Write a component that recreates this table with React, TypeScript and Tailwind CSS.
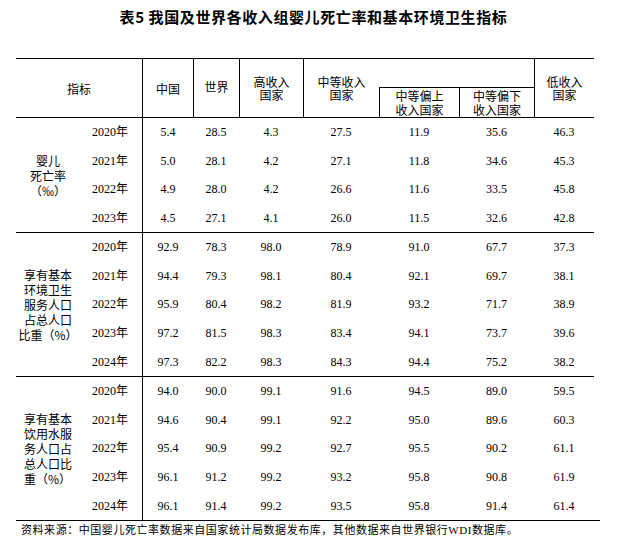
const COLS = "grid grid-cols-[62px_64px_51px_46px_64px_76px_80px_75px_60px]";
const ROW_COLS = "grid grid-cols-[64px_51px_46px_64px_76px_80px_75px_60px]";

const sans = "font-['Noto_Sans_CJK_SC',sans-serif]";
const serif = "font-['Liberation_Serif','Noto_Sans_CJK_SC',serif]";

interface Group {
    label: string[];
    left?: boolean;
    height: string;
    border: boolean;
    rows: string[][];
}

const groups: Group[] = [
    {
        label: ["婴儿", "死亡率", "（‰）"],
        height: "h-[115px]",
        border: true,
        rows: [
            ["2020年", "5.4", "28.5", "4.3", "27.5", "11.9", "35.6", "46.3"],
            ["2021年", "5.0", "28.1", "4.2", "27.1", "11.8", "34.6", "45.3"],
            ["2022年", "4.9", "28.0", "4.2", "26.6", "11.6", "33.5", "45.8"],
            ["2023年", "4.5", "27.1", "4.1", "26.0", "11.5", "32.6", "42.8"],
        ],
    },
    {
        label: ["享有基本", "环境卫生", "服务人口", "占总人口", "比重（%）"],
        height: "h-[144px]",
        border: true,
        rows: [
            ["2020年", "92.9", "78.3", "98.0", "78.9", "91.0", "67.7", "37.3"],
            ["2021年", "94.4", "79.3", "98.1", "80.4", "92.1", "69.7", "38.1"],
            ["2022年", "95.9", "80.4", "98.2", "81.9", "93.2", "71.7", "38.9"],
            ["2023年", "97.2", "81.5", "98.3", "83.4", "94.1", "73.7", "39.6"],
            ["2024年", "97.3", "82.2", "98.3", "84.3", "94.4", "75.2", "38.2"],
        ],
    },
    {
        label: ["享有基本", "饮用水服", "务人口占", "总人口比", "重（%）"],
        left: true,
        height: "h-[143px]",
        border: false,
        rows: [
            ["2020年", "94.0", "90.0", "99.1", "91.6", "94.5", "89.0", "59.5"],
            ["2021年", "94.6", "90.4", "99.1", "92.2", "95.0", "89.6", "60.3"],
            ["2022年", "95.4", "90.9", "99.2", "92.7", "95.5", "90.2", "61.1"],
            ["2023年", "96.1", "91.2", "99.2", "93.2", "95.8", "90.8", "61.9"],
            ["2024年", "96.1", "91.4", "99.2", "93.5", "95.8", "91.4", "61.4"],
        ],
    },
];

// each header line is its own fixed-height block so lines stay tight
function HeadCell({ lines, className, lineH = "h-[13px]" }: { lines: string[]; className: string; lineH?: string }) {
    return (
        <div className={`flex flex-col items-center justify-center text-center ${className}`}>
            {lines.map((l) => (
                <div key={l} className={`${lineH} flex items-center`}>
                    {l}
                </div>
            ))}
        </div>
    );
}

function GroupBlock({ group }: { group: Group }) {
    return (
        <div className={`flex ${group.height} ${group.border ? "border-b border-black" : ""}`}>
            <div className="w-[62px] flex items-center justify-center pl-[2px]">
                <div className={`flex flex-col ${group.left ? "items-start" : "items-center"} text-[12px] leading-[15px] ${sans}`}>
                    {group.label.map((l) => (
                        <div key={l} className="h-[15px] flex items-center">
                            {l}
                        </div>
                    ))}
                </div>
            </div>
            <div className="flex-1 flex flex-col">
                {group.rows.map((row) => (
                    <div key={row[0]} className={`${ROW_COLS} flex-1 text-[12px] ${serif}`}>
                        {row.map((cell, i) => (
                            <div
                                key={i}
                                className={`flex items-center justify-center ${i === 1 ? "border-l border-black" : ""}`}
                            >
                                {cell}
                            </div>
                        ))}
                    </div>
                ))}
            </div>
        </div>
    );
}

export default function App() {
    return (
        <div className="w-[623px] h-[543px] bg-white text-black">
            <div className={`h-[58px] pt-[8px] pl-[4px] text-center text-[15px] leading-[17px] font-bold tracking-[0.6px] ${sans}`}>
                表5 我国及世界各收入组婴儿死亡率和基本环境卫生指标
            </div>
            <div className="ml-[16px] w-[578px]">
                <div className={`${COLS} grid-rows-[28px_30px] h-[60px] border-t border-b border-black text-[12px] leading-[13px] ${sans}`}>
                    <HeadCell lines={["指标"]} className="col-span-2 row-span-2" />
                    <HeadCell lines={["中国"]} className="row-span-2 border-l border-black" />
                    <HeadCell lines={["世界"]} className="row-span-2 border-l border-black pb-[4px]" />
                    <HeadCell lines={["高收入", "国家"]} className="row-span-2 border-l border-black" />
                    <HeadCell lines={["中等收入", "国家"]} className="row-span-2 border-l border-black" />
                    <div className="col-span-2" />
                    <HeadCell lines={["低收入", "国家"]} className="row-span-2 border-l border-black" />
                    <HeadCell lines={["中等偏上", "收入国家"]} lineH="h-[14px]" className="col-start-7 row-start-2 border-l border-t border-black" />
                    <HeadCell lines={["中等偏下", "收入国家"]} lineH="h-[14px]" className="col-start-8 row-start-2 border-l border-t border-black" />
                </div>
                {groups.map((g) => (
                    <GroupBlock key={g.label.join("")} group={g} />
                ))}
            </div>
            <div className={`ml-[16px] w-[584px] border-t border-black pt-[2px] pl-[5px] text-[11px] leading-[14px] tracking-[0.55px] ${serif}`}>
                资料来源：中国婴儿死亡率数据来自国家统计局数据发布库，其他数据来自世界银行WDI数据库。
            </div>
        </div>
    );
}
